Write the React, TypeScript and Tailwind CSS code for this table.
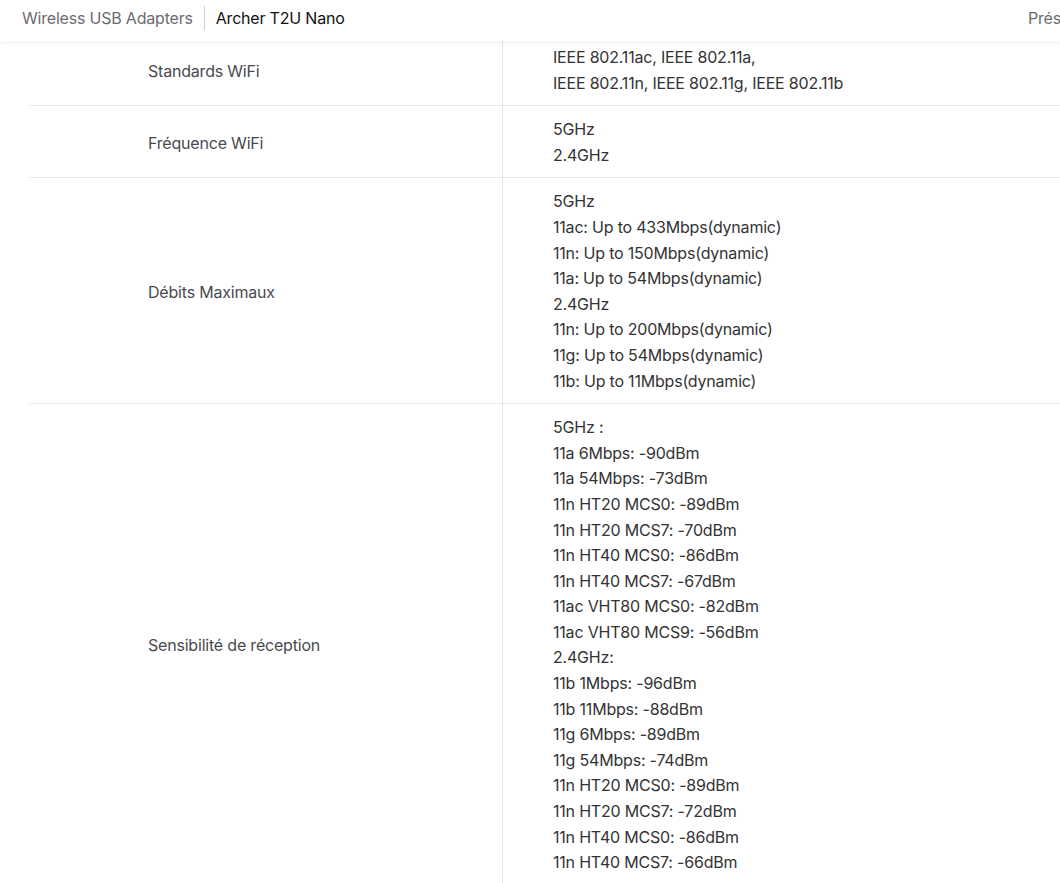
const specs: { label: string; lines: string[] }[] = [
  {
    label: "Standards WiFi",
    lines: ["IEEE 802.11ac, IEEE 802.11a,", "IEEE 802.11n, IEEE 802.11g, IEEE 802.11b"],
  },
  { label: "Fréquence WiFi", lines: ["5GHz", "2.4GHz"] },
  {
    label: "Débits Maximaux",
    lines: [
      "5GHz",
      "11ac: Up to 433Mbps(dynamic)",
      "11n: Up to 150Mbps(dynamic)",
      "11a: Up to 54Mbps(dynamic)",
      "2.4GHz",
      "11n: Up to 200Mbps(dynamic)",
      "11g: Up to 54Mbps(dynamic)",
      "11b: Up to 11Mbps(dynamic)",
    ],
  },
  {
    label: "Sensibilité de réception",
    lines: [
      "5GHz :",
      "11a 6Mbps: -90dBm",
      "11a 54Mbps: -73dBm",
      "11n HT20 MCS0: -89dBm",
      "11n HT20 MCS7: -70dBm",
      "11n HT40 MCS0: -86dBm",
      "11n HT40 MCS7: -67dBm",
      "11ac VHT80 MCS0: -82dBm",
      "11ac VHT80 MCS9: -56dBm",
      "2.4GHz:",
      "11b 1Mbps: -96dBm",
      "11b 11Mbps: -88dBm",
      "11g 6Mbps: -89dBm",
      "11g 54Mbps: -74dBm",
      "11n HT20 MCS0: -89dBm",
      "11n HT20 MCS7: -72dBm",
      "11n HT40 MCS0: -86dBm",
      "11n HT40 MCS7: -66dBm",
    ],
  },
];

function SpecRow({ label, lines, last }: { label: string; lines: string[]; last: boolean }) {
  return (
    <div className={`flex ${last ? "" : "border-b border-[#e8e8ea]"}`}>
      <div className="flex w-[473px] shrink-0 items-center pl-[119px] pt-[2px] text-[16px] text-[#4a4a4f]">
        {label}
      </div>
      <div className="flex-1 border-l border-[#e4e4e8] pb-[9px] pl-[50px] pt-[11px] text-[16px] leading-[25.6px] text-[#333]">
        {lines.map((line, i) => (
          <p key={i}>{line}</p>
        ))}
      </div>
    </div>
  );
}

export default function App() {
  return (
    <div
      className="relative h-[883px] w-[1060px] overflow-hidden bg-white tracking-[-0.2px]"
      style={{ fontFamily: "Inter, 'Liberation Sans', sans-serif" }}
    >
      <header className="absolute inset-x-0 top-0 z-10 flex h-[41px] items-start overflow-hidden bg-white shadow-[0_2px_5px_rgba(0,0,0,0.05)]">
        <div className="flex h-9 w-full items-center pl-[22px] text-[16px]">
          <span className="text-[#6b6b70]">Wireless USB Adapters</span>
          <span className="ml-[11px] mr-[11px] h-[24px] w-px bg-[#cfcfd3]" />
          <span className="text-[#111]">Archer T2U Nano</span>
          <span className="absolute left-[1028px] whitespace-nowrap text-[#6b6b70]">Présentation</span>
        </div>
      </header>
      <div className="w-[1120px] pl-[29px] pt-[34px]">
        {specs.map((s, i) => (
          <SpecRow key={s.label} label={s.label} lines={s.lines} last={i === specs.length - 1} />
        ))}
      </div>
    </div>
  );
}
